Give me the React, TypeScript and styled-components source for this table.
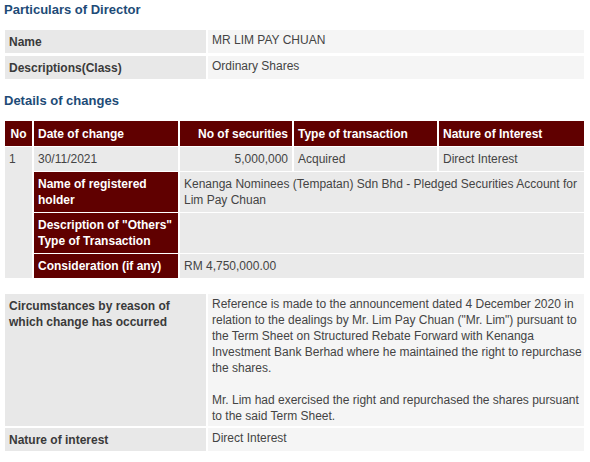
import React from 'react';
import styled, { createGlobalStyle } from 'styled-components';

// -----------------------------------------------------------------------------
// Global
// -----------------------------------------------------------------------------
const GlobalStyle = createGlobalStyle`
  body {
    margin: 0;
    background: #ffffff;
    font-family: "Liberation Sans", Arial, sans-serif;
    font-size: 12px;
    color: #444;
  }
`;

// -----------------------------------------------------------------------------
// Styles
// -----------------------------------------------------------------------------
const Page = styled.div`
  width: 583px;
  padding-left: 3px;
`;

const SectionTitle = styled.h3<{ $top?: number }>`
  margin: ${({ $top }) => $top ?? 1}px 0 0 1px;
  font-size: 13px;
  line-height: 18px;
  font-weight: bold;
  color: #1d4b77;
`;

const InfoTable = styled.table<{ $spacing: string; $top: number }>`
  width: 100%;
  border-collapse: separate;
  border-spacing: ${({ $spacing }) => $spacing};
  margin-top: ${({ $top }) => $top}px;
  line-height: 16px;
`;

const LabelCell = styled.td`
  width: 193px;
  background: #e8e8e8;
  color: #3a3a3a;
  font-weight: bold;
  padding: 4px 4px 3px;
  vertical-align: top;
`;

const ValueCell = styled.td`
  background: #f5f5f5;
  color: #444;
  padding: 2px 0 2px 4px;
  vertical-align: top;
`;

const ChangesTable = styled.table`
  width: 100%;
  border-collapse: separate;
  border-spacing: 2px 1px;
  margin-top: 10px;
  line-height: 16px;
  table-layout: fixed;
`;

const HeadCell = styled.th<{ $align?: 'left' | 'right' | 'center' }>`
  background: #600000;
  color: #ffffff;
  font-weight: bold;
  text-align: ${({ $align }) => $align ?? 'left'};
  padding: 5px 4px 4px;
  white-space: nowrap;
`;

const BodyCell = styled.td<{ $align?: 'left' | 'right' }>`
  background: #eaeaea;
  color: #444;
  text-align: ${({ $align }) => $align ?? 'left'};
  padding: 4px;
  vertical-align: top;
`;

const SubLabelCell = styled.td`
  background: #600000;
  color: #ffffff;
  font-weight: bold;
  padding: 4px 2px 4px 4px;
  vertical-align: top;
`;

const Paragraph = styled.p`
  margin: 0;

  & + & {
    margin-top: 16px;
  }
`;

// -----------------------------------------------------------------------------
// Component
// -----------------------------------------------------------------------------
const App = (): JSX.Element => (
  <>
    <GlobalStyle />
    <Page>
      <SectionTitle>Particulars of Director</SectionTitle>
      <InfoTable $spacing="2px 3px" $top={8}>
        <tbody>
          <tr>
            <LabelCell>Name</LabelCell>
            <ValueCell>MR LIM PAY CHUAN</ValueCell>
          </tr>
          <tr>
            <LabelCell>Descriptions(Class)</LabelCell>
            <ValueCell>Ordinary Shares</ValueCell>
          </tr>
        </tbody>
      </InfoTable>

      <SectionTitle $top={10}>Details of changes</SectionTitle>
      <ChangesTable>
        <colgroup>
          <col style={{ width: 27 }} />
          <col style={{ width: 144 }} />
          <col style={{ width: 112 }} />
          <col style={{ width: 143 }} />
          <col />
        </colgroup>
        <thead>
          <tr>
            <HeadCell $align="center">No</HeadCell>
            <HeadCell>Date of change</HeadCell>
            <HeadCell $align="right">No of securities</HeadCell>
            <HeadCell>Type of transaction</HeadCell>
            <HeadCell>Nature of Interest</HeadCell>
          </tr>
        </thead>
        <tbody>
          <tr>
            <BodyCell rowSpan={4}>1</BodyCell>
            <BodyCell>30/11/2021</BodyCell>
            <BodyCell $align="right">5,000,000</BodyCell>
            <BodyCell>Acquired</BodyCell>
            <BodyCell>Direct Interest</BodyCell>
          </tr>
          <tr>
            <SubLabelCell>Name of registered holder</SubLabelCell>
            <BodyCell colSpan={3}>
              Kenanga Nominees (Tempatan) Sdn Bhd - Pledged Securities Account for Lim Pay Chuan
            </BodyCell>
          </tr>
          <tr>
            <SubLabelCell>Description of "Others" Type of Transaction</SubLabelCell>
            <BodyCell colSpan={3} />
          </tr>
          <tr>
            <SubLabelCell>Consideration (if any)</SubLabelCell>
            <BodyCell colSpan={3}>RM 4,750,000.00</BodyCell>
          </tr>
        </tbody>
      </ChangesTable>

      <InfoTable $spacing="2px" $top={13}>
        <tbody>
          <tr>
            <LabelCell>Circumstances by reason of which change has occurred</LabelCell>
            <ValueCell>
              <Paragraph>
                Reference is made to the announcement dated 4 December 2020 in relation to the
                dealings by Mr. Lim Pay Chuan ("Mr. Lim") pursuant to the Term Sheet on Structured
                Rebate Forward with Kenanga Investment Bank Berhad where he maintained the right to
                repurchase the shares.
              </Paragraph>
              <Paragraph>
                Mr. Lim had exercised the right and repurchased the shares pursuant to the said Term
                Sheet.
              </Paragraph>
            </ValueCell>
          </tr>
          <tr>
            <LabelCell>Nature of interest</LabelCell>
            <ValueCell>Direct Interest</ValueCell>
          </tr>
        </tbody>
      </InfoTable>
    </Page>
  </>
);

export default App;
